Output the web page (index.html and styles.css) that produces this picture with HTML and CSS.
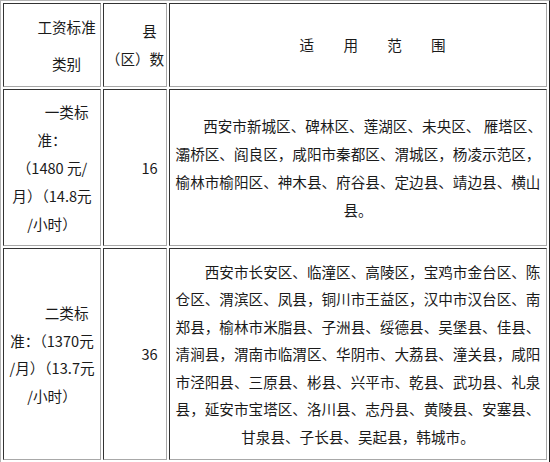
FILE: index.html
```html
<!DOCTYPE html>
<html lang="zh-CN">
<head>
<meta charset="utf-8">
<title>工资标准类别</title>
<link rel="stylesheet" href="styles.css">
</head>
<body>
<table class="wage">
  <colgroup>
    <col class="c-type">
    <col class="c-count">
    <col class="c-scope">
  </colgroup>
  <tr class="r-head">
    <td><p>工资标准</p><p class="sub">类别</p></td>
    <td><p>县<br>（区）数</p></td>
    <td><p>适　　用　　范　　围</p></td>
  </tr>
  <tr class="r-one">
    <td><p>一类标<br>准：<br>（1480 元/<br>月）（14.8元<br>/小时）</p></td>
    <td><p>16</p></td>
    <td><p>西安市新城区、碑林区、莲湖区、未央区、 雁塔区、<br>灞桥区、阎良区，咸阳市秦都区、渭城区，杨凌示范区，<br>榆林市榆阳区、神木县、府谷县、定边县、靖边县、横山<br>县。</p></td>
  </tr>
  <tr class="r-two">
    <td><p>二类标<br>准：（1370元<br>/月）（13.7元<br>/小时）</p></td>
    <td><p>36</p></td>
    <td><p>西安市长安区、临潼区、高陵区，宝鸡市金台区、陈<br>仓区、渭滨区、凤县，铜川市王益区，汉中市汉台区、南<br>郑县，榆林市米脂县、子洲县、绥德县、吴堡县、佳县、<br>清涧县，渭南市临渭区、华阴市、大荔县、潼关县，咸阳<br>市泾阳县、三原县、彬县、兴平市、乾县、武功县、礼泉<br>县，延安市宝塔区、洛川县、志丹县、黄陵县、安塞县、<br>甘泉县、子长县、吴起县，韩城市。</p></td>
  </tr>
</table>
</body>
</html>
```

FILE: styles.css
```css
html, body {
  margin: 0;
  padding: 0;
  overflow: hidden;
  background: #ffffff;
}

.wage {
  border-collapse: separate;
  border-spacing: 2px;
  border: 1px solid;
  border-color: #b4b4b4 #222222 #222222 #b4b4b4;
  table-layout: fixed;
  width: 550px;
  font-family: "Noto Sans CJK SC", "Noto Sans", sans-serif;
  font-size: 14.6px;
  color: #1a1a1a;
}

.c-type { width: 98px; }
.c-count { width: 64px; }
.c-scope { width: 378px; }

.wage td {
  box-sizing: border-box;
  border: 1px solid;
  border-color: #333333 #a8a8a8 #a8a8a8 #333333;
  padding: 0;
  vertical-align: middle;
}

.wage p {
  margin: 0;
  text-indent: 2em;
  text-align: center;
  line-height: 28px;
  white-space: nowrap;
}

.wage p.sub {
  margin-top: 9px;
}

.r-head td { height: 84px; }
.r-one td { height: 157px; }
.r-two td { height: 212px; }

.r-two p { line-height: 27.5px; }
```
